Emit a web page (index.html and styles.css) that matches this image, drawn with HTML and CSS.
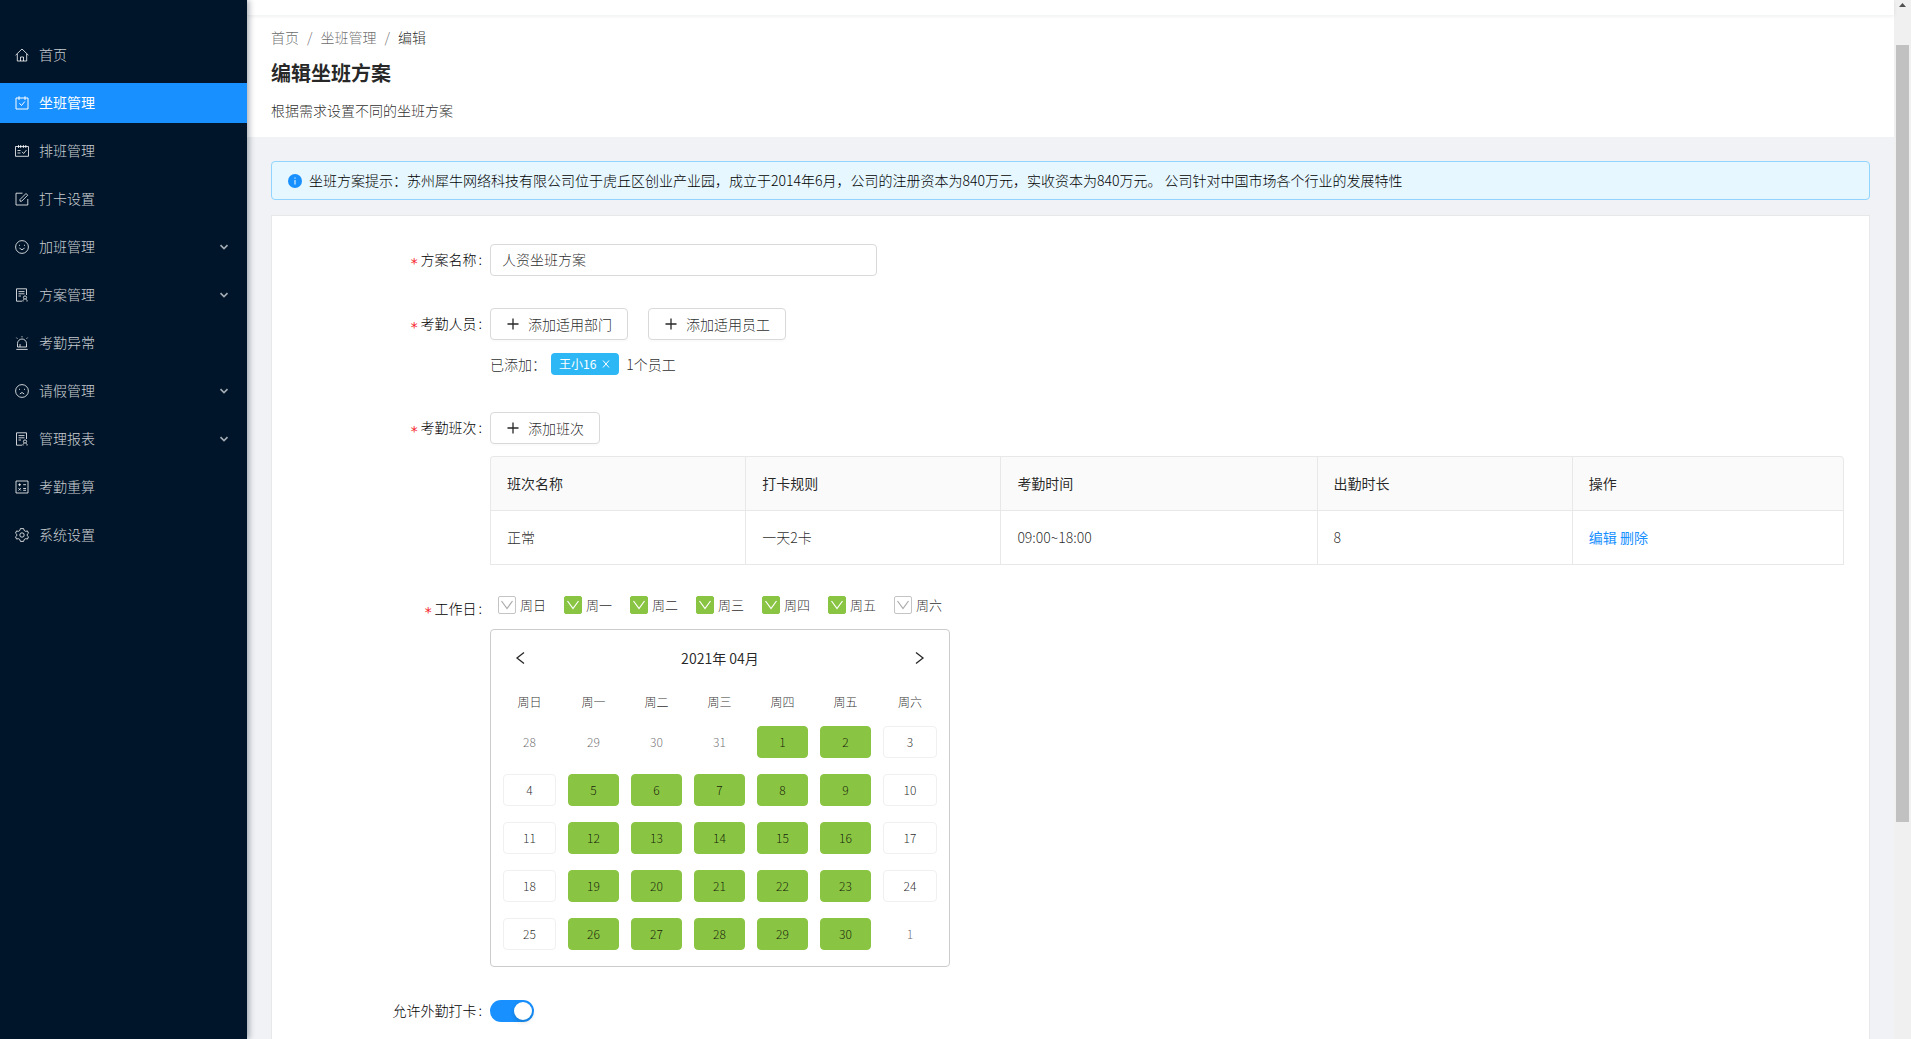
FILE: index.html
```html
<!DOCTYPE html>
<html lang="zh-CN">
<head>
  <meta charset="UTF-8" />
  <meta name="viewport" content="width=device-width, initial-scale=1.0"/>
  <title>编辑坐班方案</title>
  <link rel="stylesheet" href="styles.css">
</head>
<body>
  <!-- shared shapes -->
  <svg class="defs" aria-hidden="true">
    <symbol id="i-down" viewBox="0 0 10 10"><path d="M1.5 3.2 5 6.5 8.500 3.200" stroke-width="1.7"/></symbol>
    <symbol id="i-plus" viewBox="0 0 14 14"><path d="M7 1.500V12.500M1.500 7H12.500" stroke-width="1.300"/></symbol>
    <symbol id="i-check" viewBox="0 0 18 18"><path d="M3.500 5 9 12.500 14.500 5" stroke-width="1.200"/></symbol>
    <symbol id="i-report" viewBox="0 0 14 14"><path d="M7 13.200H1.500V.8H11.500V7M3.500 3.600H9.500M3.500 5.800H9.500M3.500 8H6M8 13.500V12.200L9 11.200M12 13.500V12.200L11 11.200"/><circle cx="10" cy="9.500" r="1.600"/></symbol>
  </svg>

  <aside class="sidebar">
    <nav class="menu">
      <a href="#" class="menu-item">
        <svg class="icon" viewBox="0 0 14 14"><path d="M.6 7.200 7 1 13.400 7.200M2.300 6V13H11.700V6M5.500 13V9H8.500V13"/></svg>
        <span>首页</span>
      </a>
      <a href="#" class="menu-item active">
        <svg class="icon" viewBox="0 0 14 14"><path d="M1 2H13V13H1ZM4 .3V4M10 .3V4M4.500 7.300 6.500 9.500 9.800 5.500"/></svg>
        <span>坐班管理</span>
      </a>
      <a href="#" class="menu-item">
        <svg class="icon" viewBox="0 0 14 14"><path d="M.5 2.500H13.500V12.300H.5ZM3.500 1V4M5.700 1V4M8.400 1V4M10.800 1V4M2.500 6.500H5.500M2.500 9H5.500M7 7.800 8.600 9.500 11.500 6"/></svg>
        <span>排班管理</span>
      </a>
      <a href="#" class="menu-item">
        <svg class="icon" viewBox="0 0 14 14"><path d="M7.500 1.200H1V13H12.800V7M5 7.500 11 1.500 12.700 3.200 6.700 9.200H5Z"/></svg>
        <span>打卡设置</span>
      </a>
      <a href="#" class="menu-item">
        <svg class="icon" viewBox="0 0 14 14"><circle cx="7" cy="7" r="6.400"/><path d="M4 5.300H5M9 5.300H10M4.500 7.800Q7 11.500 9.500 7.800"/></svg>
        <span>加班管理</span>
        <svg class="arrow"><use href="#i-down"/></svg>
      </a>
      <a href="#" class="menu-item">
        <svg class="icon"><use href="#i-report"/></svg>
        <span>方案管理</span>
        <svg class="arrow"><use href="#i-down"/></svg>
      </a>
      <a href="#" class="menu-item">
        <svg class="icon" viewBox="0 0 14 14"><path d="M2.500 11V7.500A4.500 4.500 0 0 1 11.500 7.500V11ZM1.300 13.400H12.700M7 .2V1.400M1.400 1.600 2.400 2.700M12.600 1.600 11.600 2.700M5 11V8"/></svg>
        <span>考勤异常</span>
      </a>
      <a href="#" class="menu-item">
        <svg class="icon" viewBox="0 0 14 14"><circle cx="7" cy="7" r="6.400"/><path d="M4 5.300H5M9 5.300H10M4.800 10Q7 7 9.200 10"/></svg>
        <span>请假管理</span>
        <svg class="arrow"><use href="#i-down"/></svg>
      </a>
      <a href="#" class="menu-item">
        <svg class="icon"><use href="#i-report"/></svg>
        <span>管理报表</span>
        <svg class="arrow"><use href="#i-down"/></svg>
      </a>
      <a href="#" class="menu-item">
        <svg class="icon" viewBox="0 0 14 14"><path d="M1 1H13V13H1ZM3.200 4.700H6M4.600 3.300V6.100M8.200 4.700H11M3.500 8.200 5.800 10.500M5.800 8.200 3.500 10.500M8.200 8.500H11M8.200 10.300H11"/></svg>
        <span>考勤重算</span>
      </a>
      <a href="#" class="menu-item">
        <svg class="icon" viewBox="0 0 14 14"><path d="M5.400.6H8.600L9.200 2.500 10.800 3.400 12.400 2.900 13.500 5.200 12.200 6.300V7.700L13.500 8.800 12.400 11.100 10.800 10.600 9.200 11.500 8.600 13.400H5.400L4.800 11.500 3.200 10.600 1.600 11.100.5 8.800 1.800 7.700V6.300L.5 5.200 1.600 2.900 3.200 3.400 4.800 2.500Z"/><circle cx="7" cy="7" r="2.200"/></svg>
        <span>系统设置</span>
      </a>
    </nav>
  </aside>

  <main class="main">
    <div class="topbar"></div>
    <header class="page-header">
      <nav class="breadcrumb">
        <a href="#">首页</a><i>/</i><a href="#">坐班管理</a><i>/</i><span>编辑</span>
      </nav>
      <h1>编辑坐班方案</h1>
      <p>根据需求设置不同的坐班方案</p>
    </header>

    <div class="content">
      <div class="alert">
        <svg class="info" viewBox="0 0 14 14"><circle cx="7" cy="7" r="7"/><path d="M7 6V10.500M7 3.500V4.700"/></svg>
        <span>坐班方案提示：苏州犀牛网络科技有限公司位于虎丘区创业产业园，成立于2014年6月，公司的注册资本为840万元，实收资本为840万元。 公司针对中国市场各个行业的发展特性</span>
      </div>

      <form class="card">
        <div class="form-row">
          <label class="form-label required" for="planName">方案名称</label>
          <div class="form-control">
            <input type="text" id="planName" class="text-input" value="人资坐班方案"/>
          </div>
        </div>

        <div class="form-row">
          <span class="form-label required">考勤人员</span>
          <div class="form-control">
            <div class="btn-group">
              <button type="button" class="btn"><svg class="icon"><use href="#i-plus"/></svg>添加适用部门</button>
              <button type="button" class="btn"><svg class="icon"><use href="#i-plus"/></svg>添加适用员工</button>
            </div>
            <div class="added">
              <span class="added-label">已添加：</span>
              <span class="tag">王小16<button type="button" class="tag-close" aria-label="移除"><svg viewBox="0 0 8 8"><path d="M1 .5 7 7.500M7 .5 1 7.500"/></svg></button></span>
              <span>1个员工</span>
            </div>
          </div>
        </div>

        <div class="form-row tight">
          <span class="form-label required">考勤班次</span>
          <div class="form-control">
            <button type="button" class="btn"><svg class="icon"><use href="#i-plus"/></svg>添加班次</button>
            <table class="shift-table">
              <thead>
                <tr><th class="col-name">班次名称</th><th class="col-rule">打卡规则</th><th class="col-time">考勤时间</th><th class="col-hours">出勤时长</th><th class="col-action">操作</th></tr>
              </thead>
              <tbody>
                <tr><td>正常</td><td>一天2卡</td><td>09:00~18:00</td><td>8</td><td><a href="#">编辑</a> <a href="#">删除</a></td></tr>
              </tbody>
            </table>
          </div>
        </div>

        <div class="form-row tight">
          <span class="form-label required">工作日</span>
          <div class="form-control">
            <div class="weekdays">
              <label class="check"><input type="checkbox"/><svg><use href="#i-check"/></svg><span>周日</span></label>
              <label class="check"><input type="checkbox" checked/><svg><use href="#i-check"/></svg><span>周一</span></label>
              <label class="check"><input type="checkbox" checked/><svg><use href="#i-check"/></svg><span>周二</span></label>
              <label class="check"><input type="checkbox" checked/><svg><use href="#i-check"/></svg><span>周三</span></label>
              <label class="check"><input type="checkbox" checked/><svg><use href="#i-check"/></svg><span>周四</span></label>
              <label class="check"><input type="checkbox" checked/><svg><use href="#i-check"/></svg><span>周五</span></label>
              <label class="check"><input type="checkbox"/><svg><use href="#i-check"/></svg><span>周六</span></label>
            </div>

            <div class="calendar">
              <div class="cal-head">
                <button type="button" class="cal-nav" aria-label="上个月"><svg viewBox="0 0 12 14"><path d="M9 1.500 2 7 9 12.500"/></svg></button>
                <strong>2021年 04月</strong>
                <button type="button" class="cal-nav" aria-label="下个月"><svg viewBox="0 0 12 14"><path d="M3 1.500 10 7 3 12.500"/></svg></button>
              </div>
              <div class="cal-grid cal-week">
                <span>周日</span><span>周一</span><span>周二</span><span>周三</span><span>周四</span><span>周五</span><span>周六</span>
              </div>
              <div class="cal-grid cal-days">
                <button type="button" class="day other">28</button>
                <button type="button" class="day other">29</button>
                <button type="button" class="day other">30</button>
                <button type="button" class="day other">31</button>
                <button type="button" class="day work">1</button>
                <button type="button" class="day work">2</button>
                <button type="button" class="day">3</button>
                <button type="button" class="day">4</button>
                <button type="button" class="day work">5</button>
                <button type="button" class="day work">6</button>
                <button type="button" class="day work">7</button>
                <button type="button" class="day work">8</button>
                <button type="button" class="day work">9</button>
                <button type="button" class="day">10</button>
                <button type="button" class="day">11</button>
                <button type="button" class="day work">12</button>
                <button type="button" class="day work">13</button>
                <button type="button" class="day work">14</button>
                <button type="button" class="day work">15</button>
                <button type="button" class="day work">16</button>
                <button type="button" class="day">17</button>
                <button type="button" class="day">18</button>
                <button type="button" class="day work">19</button>
                <button type="button" class="day work">20</button>
                <button type="button" class="day work">21</button>
                <button type="button" class="day work">22</button>
                <button type="button" class="day work">23</button>
                <button type="button" class="day">24</button>
                <button type="button" class="day">25</button>
                <button type="button" class="day work">26</button>
                <button type="button" class="day work">27</button>
                <button type="button" class="day work">28</button>
                <button type="button" class="day work">29</button>
                <button type="button" class="day work">30</button>
                <button type="button" class="day other">1</button>
              </div>
            </div>
          </div>
        </div>

        <div class="form-row">
          <label class="form-label" for="outside">允许外勤打卡</label>
          <div class="form-control switch-wrap">
            <input type="checkbox" id="outside" class="switch" role="switch" checked/>
          </div>
        </div>
      </form>
    </div>
  </main>

  <div class="scrollbar" aria-hidden="true">
    <svg viewBox="0 0 7 4"><path d="M0 4 3.500 0 7 4Z"/></svg>
    <div class="thumb"></div>
  </div>
</body>
</html>
```
FILE: styles.css
```css
* {
  box-sizing: border-box;
}

body {
  display: flex;
  height: 100vh;
  margin: 0;
  overflow: hidden;
  font-family: "Noto Sans CJK SC", sans-serif;
  font-size: 14px;
  font-weight: 300;
  line-height: 22px;
  color: rgba(0, 0, 0, 0.85);
  background-color: #f0f2f5;
}

a {
  color: #1890ff;
  text-decoration: none;
}

button,
input {
  margin: 0;
  font: inherit;
  color: inherit;
}

button {
  cursor: pointer;
}

svg {
  flex: none;
  fill: none;
  stroke: currentColor;
}

.defs {
  position: absolute;
  width: 0;
  height: 0;
}

.icon {
  width: 14px;
  height: 14px;
}

/* sidebar */
.sidebar {
  position: relative;
  z-index: 2;
  flex: none;
  width: 247px;
  padding-top: 35px;
  background-color: #001529;
  box-shadow: 2px 0 6px rgba(0, 21, 41, 0.35);
}

.menu {
  display: flex;
  flex-direction: column;
  gap: 8px;
}

.menu-item {
  display: flex;
  align-items: center;
  gap: 10px;
  height: 40px;
  padding: 0 18px 0 15px;
  color: rgba(255, 255, 255, 0.8);
}

.menu-item span {
  padding-bottom: 2px;
}

.menu-item.active {
  font-weight: 400;
  color: #fff;
  background-color: #1890ff;
}

.arrow {
  width: 10px;
  height: 10px;
  margin-left: auto;
  opacity: 0.8;
}

/* page header */
.main {
  display: flex;
  flex: 1;
  flex-direction: column;
  min-width: 0;
}

.topbar {
  z-index: 1;
  flex: none;
  height: 15px;
  background-color: #fff;
  box-shadow: 0 1px 4px rgba(0, 21, 41, 0.08);
}

.page-header {
  flex: none;
  padding: 11px 24px 16px;
  background-color: #fff;
}

.breadcrumb a,
.breadcrumb i {
  font-style: normal;
  color: rgba(0, 0, 0, 0.6);
}

.breadcrumb i {
  margin: 0 8px;
}

.page-header h1 {
  margin: 9px 0 10px;
  font-size: 20px;
  font-weight: 700;
  line-height: 32px;
  color: rgba(0, 0, 0, 0.85);
}

.page-header p {
  margin: 0;
}

.content {
  display: flex;
  flex: 1;
  flex-direction: column;
  padding: 24px 24px 0;
}

.alert {
  display: flex;
  align-items: center;
  gap: 7px;
  padding: 8px 16px;
  margin-bottom: 15px;
  line-height: 21px;
  color: #000;
  background-color: #e6f7ff;
  border: 1px solid #91d5ff;
  border-radius: 4px;
}

.info {
  width: 14px;
  height: 14px;
  stroke: #fff;
}

.info circle {
  fill: #1890ff;
  stroke: none;
}

/* form */
.card {
  flex: 1;
  padding: 28px 25px 0 0;
  background-color: #fff;
  border: 1px solid #e8e8e8;
  border-bottom: 0;
}

.form-row {
  display: flex;
  margin-bottom: 32px;
}

.form-row.tight {
  margin-bottom: 28px;
}

.form-label {
  flex: none;
  width: 218px;
  height: 32px;
  padding-right: 8px;
  line-height: 30px;
  text-align: right;
  color: #000;
}

.form-label::after {
  margin-left: 2px;
  content: ":";
}

.required::before {
  margin-right: 2px;
  font-family: "DejaVu Sans Mono", monospace;
  font-weight: 400;
  line-height: 1;
  vertical-align: -3px;
  color: #f5222d;
  content: "*";
}

.form-control {
  flex: 1;
  min-width: 0;
}

.text-input {
  display: block;
  width: 387px;
  height: 32px;
  padding: 3px 11px 5px;
  background-color: #fff;
  border: 1px solid #d9d9d9;
  border-radius: 4px;
}

.btn-group {
  display: flex;
  gap: 20px;
}

.btn {
  display: flex;
  align-items: center;
  gap: 8px;
  height: 32px;
  padding: 0 15px;
  background-color: #fff;
  border: 1px solid #d9d9d9;
  border-radius: 4px;
  box-shadow: 0 2px 0 rgba(0, 0, 0, 0.015);
}

.added {
  display: flex;
  align-items: center;
  height: 32px;
  margin-top: 8px;
}

.added-label {
  margin-right: 5px;
}

.tag {
  display: flex;
  align-items: center;
  gap: 6px;
  height: 22px;
  padding: 0 9px 0 8px;
  margin-right: 7px;
  font-size: 12px;
  font-weight: 400;
  color: #fff;
  background-color: #2db7f5;
  border-radius: 4px;
}

.tag-close {
  display: flex;
  padding: 0;
  background: none;
  border: 0;
}

.tag-close svg {
  width: 8px;
  height: 8px;
}

.shift-table {
  width: 100%;
  margin-top: 12px;
  line-height: 21px;
  table-layout: fixed;
  border-spacing: 0;
  border-top: 1px solid #e8e8e8;
  border-left: 1px solid #e8e8e8;
  border-radius: 4px 4px 0 0;
}

.shift-table th,
.shift-table td {
  padding: 16px;
  text-align: left;
  border-right: 1px solid #e8e8e8;
  border-bottom: 1px solid #e8e8e8;
}

.shift-table th {
  font-weight: 400;
  color: rgba(0, 0, 0, 0.85);
  background-color: #fafafa;
}

.shift-table th:first-child {
  border-top-left-radius: 4px;
}

.shift-table th:last-child {
  border-top-right-radius: 4px;
}

.shift-table a {
  font-weight: 400;
}

.col-name,
.col-rule,
.col-hours {
  width: 255px;
}

.col-time {
  width: 316px;
}

.col-action {
  width: 271px;
}

/* weekday ticks */
.weekdays {
  display: flex;
  gap: 18px;
  height: 24px;
  padding-left: 8px;
  font-size: 13px;
}

.check {
  display: grid;
  grid-template-columns: 18px auto;
  column-gap: 4px;
  align-items: center;
}

.check input {
  grid-area: 1 / 1;
  width: 18px;
  height: 18px;
  appearance: none;
  background-color: #fff;
  border: 1px solid #c4c4c4;
  border-radius: 2px;
}

.check svg {
  grid-area: 1 / 1;
  width: 18px;
  height: 18px;
  color: #aaa;
  pointer-events: none;
}

.check input:checked {
  background-color: #8ac443;
  border-color: #8ac443;
}

.check input:checked + svg {
  color: #fff;
}

/* calendar */
.calendar {
  width: 460px;
  padding: 12px 12px 16px;
  margin-top: 12px;
  border: 1px solid #ccc;
  border-radius: 4px;
}

.cal-head {
  display: flex;
  align-items: center;
  justify-content: space-between;
  height: 32px;
  padding: 0 12px;
}

.cal-head strong {
  font-weight: 400;
}

.cal-nav {
  display: flex;
  padding: 0;
  background: none;
  border: 0;
}

.cal-nav svg {
  width: 12px;
  height: 14px;
  stroke-width: 1.3;
}

.cal-grid {
  display: grid;
  grid-template-columns: 53fr repeat(5, 51fr) 54fr;
  column-gap: 12px;
  font-size: 12px;
  text-align: center;
}

.cal-week {
  margin: 17px 0 13px;
}

.cal-days {
  row-gap: 16px;
}

.day {
  height: 32px;
  padding: 0;
  background-color: #fff;
  border: 1px solid #f0f0f0;
  border-radius: 4px;
}

.day.work {
  background-color: #8ac443;
  border-color: #8ac443;
}

.day.other {
  color: rgba(0, 0, 0, 0.6);
  border-color: transparent;
}

/* switch */
.switch-wrap {
  display: flex;
  align-items: center;
}

.switch {
  display: flex;
  justify-content: flex-end;
  width: 44px;
  height: 22px;
  padding: 2px;
  appearance: none;
  background-color: #1890ff;
  border-radius: 11px;
}

.switch::before {
  width: 18px;
  height: 18px;
  background-color: #fff;
  border-radius: 50%;
  box-shadow: 0 2px 4px rgba(0, 35, 11, 0.2);
  content: "";
}

.switch:not(:checked) {
  justify-content: flex-start;
  background-color: #bfbfbf;
}

/* scrollbar */
.scrollbar {
  display: flex;
  flex: none;
  flex-direction: column;
  align-items: center;
  width: 17px;
  padding-top: 3px;
  background-color: #f0f0f0;
}

.scrollbar svg {
  width: 7px;
  height: 4px;
  margin-bottom: 38px;
  fill: #505050;
  stroke: none;
}

.thumb {
  width: 13px;
  height: 75%;
  background-color: #c1c1c1;
}
```
